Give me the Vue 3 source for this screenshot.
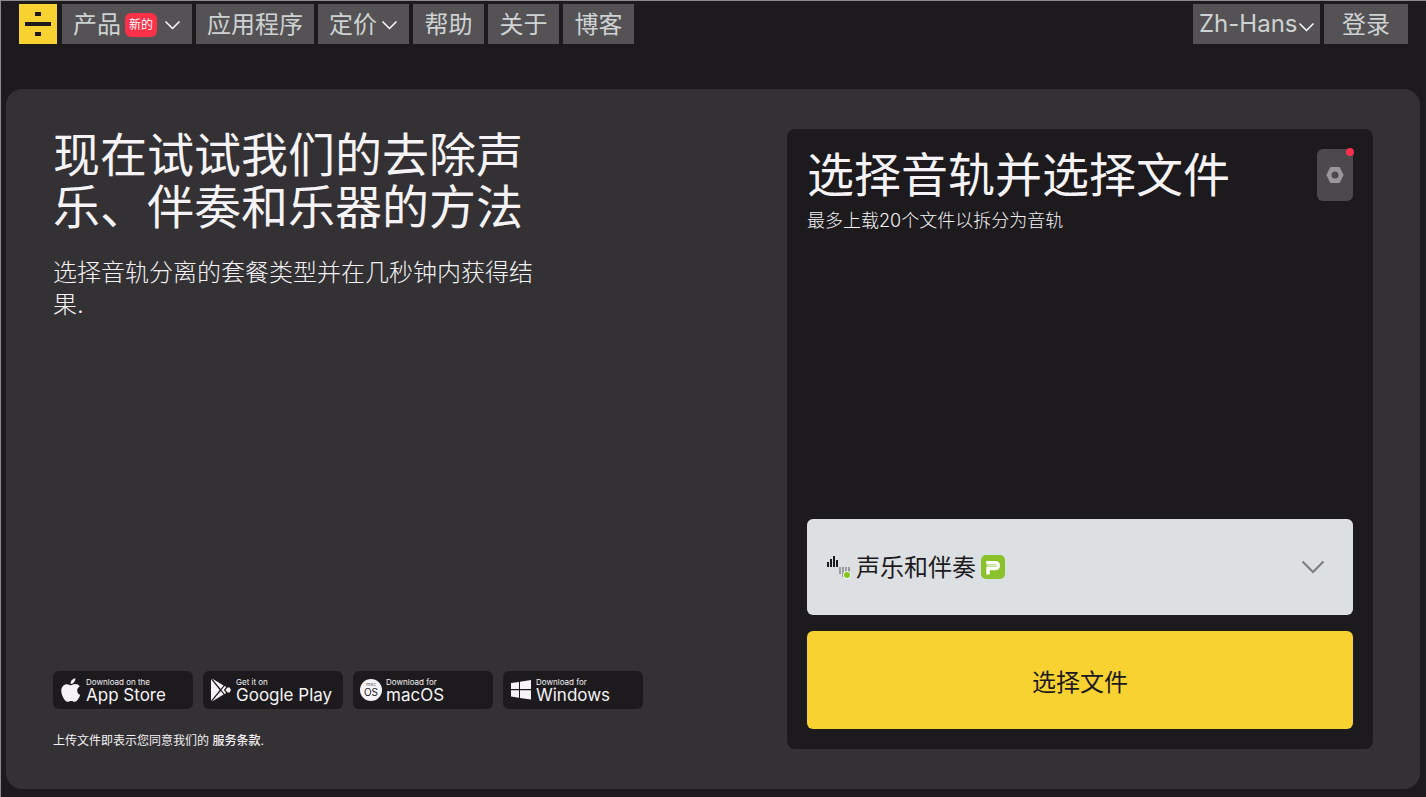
<script setup>
import { ref } from 'vue'

const menu = [
  { label: '产品', badge: '新的', dropdown: true },
  { label: '应用程序' },
  { label: '定价', dropdown: true },
  { label: '帮助' },
  { label: '关于' },
  { label: '博客' },
]
const stores = [
  { id: 'apple', small: 'Download on the', name: 'App Store' },
  { id: 'play', small: 'Get it on', name: 'Google Play' },
  { id: 'mac', small: 'Download for', name: 'macOS' },
  { id: 'windows', small: 'Download for', name: 'Windows' },
]
const language = ref('zh')
const stem = ref('vocal')
</script>

<template>
  <div class="page">
    <header class="bar">
      <a class="logo" href="#" aria-label="LALAL.AI">
        <svg width="38" height="40" viewBox="0 0 38 40" fill="#1c1a1d">
          <path d="M6 18h26v4H6zM16 8h6v4h-6zM16 28h6v4h-6z" />
        </svg>
      </a>
      <nav class="menu">
        <template v-for="item in menu" :key="item.label">
          <button v-if="item.dropdown" type="button" class="tab drop" aria-haspopup="true">
            <span>{{ item.label }}</span>
            <span v-if="item.badge" class="new">{{ item.badge }}</span>
            <svg class="chev" width="15" height="10" viewBox="0 0 15 10"><path d="M.5 1.500l7 7 7-7" /></svg>
          </button>
          <a v-else class="tab" href="#">{{ item.label }}</a>
        </template>
      </nav>
      <div class="account">
        <label class="tab lang">
          <select v-model="language" aria-label="Language">
            <option value="zh">Zh-Hans</option>
          </select>
          <svg class="chev" width="15" height="10" viewBox="0 0 15 10"><path d="M.5 1.500l7 7 7-7" /></svg>
        </label>
        <a class="tab login" href="#">登录</a>
      </div>
    </header>

    <main class="panel">
      <section class="intro">
        <h1>现在试试我们的去除声乐、伴奏和乐器的方法</h1>
        <p class="lead">选择音轨分离的套餐类型并在几秒钟内获得结果.</p>
        <div class="stores">
          <a v-for="s in stores" :key="s.id" class="store" href="#">
            <svg v-if="s.id === 'apple'" width="20" height="24" viewBox="0 0 20 24" fill="#f5f3f5">
              <path d="M14.3.2c.2 1.500-.4 2.900-1.300 4-.9 1.100-2.200 1.800-3.400 1.700-.2-1.400.5-2.900 1.300-3.800C11.800 1 13.200.3 14.300.2zM18.700 8.400c-1.600 1-2.500 2.300-2.500 4.100 0 2.100 1.200 3.700 3 4.500-.5 1.500-1.200 2.900-2.200 4.300-.9 1.300-1.900 2.500-3.300 2.500s-1.900-.8-3.500-.8c-1.700 0-2.200.8-3.600.8s-2.500-1.300-3.400-2.600C1.500 18.700.3 15.700.3 12.800c0-4.200 2.700-6.600 5.500-6.600 1.700 0 3 1.100 4 1.100s2.600-1.200 4.600-1.200c1.700 0 3.300.8 4.300 2.300z" />
            </svg>
            <svg v-else-if="s.id === 'play'" width="20" height="24" viewBox="0 0 20 24" fill="#f5f3f5">
              <path d="M0 1.200v21.600L8.700 12zM1 .4l8.700 10.500 2.900-3.500zM1 23.600l8.700-10.500 2.900 3.500zM13.600 8.100L10.400 12l3.200 3.900 1.600-1-2.400-2.900 2.400-2.900zM16.600 9.400L14.400 12l2.200 2.600h2L20 12l-1.400-2.600z" />
            </svg>
            <svg v-else-if="s.id === 'mac'" class="mac" width="20" height="24" viewBox="1 0 20 24">
              <circle cx="11" cy="12" r="11" fill="#f5f3f5" />
              <text x="11" y="8" text-anchor="middle" font-size="5" fill="#6b696c">mac</text>
              <text x="11" y="18" text-anchor="middle" font-size="10" fill="#1c1a1d">OS</text>
            </svg>
            <svg v-else width="20" height="24" viewBox="0 0 20 24" fill="#f5f3f5">
              <path d="M0 5l8-1.100V11H0zM9 3.700L20 2v9H9zM0 12.300h8v7.400l-8-1.200zM9 12.300h11v9.200l-11-1.600z" />
            </svg>
            <span class="store-text">
              <small>{{ s.small }}</small>
              <strong>{{ s.name }}</strong>
            </span>
          </a>
        </div>
        <p class="terms">上传文件即表示您同意我们的 <a href="#">服务条款</a>.</p>
      </section>

      <section class="card">
        <div class="card-head">
          <div>
            <h2>选择音轨并选择文件</h2>
            <p class="hint">最多上载20个文件以拆分为音轨</p>
          </div>
          <button type="button" class="settings" aria-label="设置">
            <svg width="18" height="16" viewBox="0 0 18 16">
              <path fill="#999799" fill-rule="evenodd" d="M5 0h8q.6 0 .9.500L17.400 7.400q.3.600 0 1.200L13.900 15.500q-.3.500-.9.500H5q-.6 0-.9-.5L.6 8.600q-.3-.6 0-1.200L4.100.500Q4.400 0 5 0zM9 4.500a3.500 3.500 0 1 0 0 7 3.500 3.500 0 0 0 0-7z" />
            </svg>
            <span class="dot"></span>
          </button>
        </div>
        <label class="stem">
          <svg width="24" height="24" viewBox="0 0 24 24">
            <path fill="#1c1a1d" d="M0 7h2v5H0zM3 4h2v8H3zM6 1h2v11H6zM9 5h2v7H9z" />
            <path fill="#999b9e" d="M12 12h2v7h-2zM15 12h2v10h-2zM18 12h2v10h-2zM21 12h2v6h-2z" />
            <circle cx="20" cy="20" r="4" fill="#f3f6f1" />
            <circle cx="20" cy="20" r="3" fill="#83c41f" />
          </svg>
          <select v-model="stem" aria-label="音轨类型">
            <option value="vocal">声乐和伴奏</option>
          </select>
          <svg width="24" height="24" viewBox="0 0 24 24">
            <rect width="24" height="24" rx="5" fill="#8bc12b" />
            <path fill="none" stroke="#fff" stroke-width="3.500" d="M7 19.500V13.500H15a2.200 2.200 0 0 0 2.200-2.200V10A2.200 2.200 0 0 0 15 7.800H5.200" />
            <path fill="none" stroke="#d5eab1" stroke-width="2" d="M6 10.700h9" />
          </svg>
          <svg class="stem-chev" width="24" height="14" viewBox="0 0 24 14"><path d="M1.500 1.500L12 12 22.500 1.500" /></svg>
        </label>
        <button type="button" class="choose">选择文件</button>
      </section>
    </main>
  </div>
</template>

<style>
body {
  background: #1c1a1d;
}
</style>

<style scoped>
* {
  box-sizing: border-box;
}
.page {
  min-height: 100vh;
  padding: 3px 6px 8px 5px;
  border-top: 1px solid #8a8a8a;
  border-left: 1px solid #8a8a8a;
  background: #1c1a1d;
  color: #f5f3f5;
  font-family: Inter, "Noto Sans CJK SC", sans-serif;
  display: flex;
  flex-direction: column;
  gap: 45px;
}
a {
  color: inherit;
  text-decoration: none;
}
button,
select {
  margin: 0;
  padding: 0;
  border: 0;
  font: inherit;
  color: inherit;
  cursor: pointer;
}
select {
  appearance: none;
  background: transparent;
}
h1,
h2,
p {
  margin: 0;
  font-weight: 400;
}
.bar {
  display: flex;
  height: 40px;
  padding: 0 12px 0 13px;
}
.logo {
  width: 38px;
  height: 40px;
  margin-right: 5px;
  background: #f8d231;
}
.menu,
.account {
  display: flex;
  gap: 4px;
}
.account {
  margin-left: auto;
}
.tab {
  display: flex;
  align-items: center;
  justify-content: center;
  min-width: 71px;
  height: 40px;
  padding: 2px 11px 0;
  background: #545255;
  color: #ced2d2;
  font-size: 24px;
  line-height: 38px;
  white-space: nowrap;
}
.drop {
  padding-right: 12px;
}
.new {
  height: 24px;
  margin: 0 3px 0 4px;
  padding: 0 4px;
  border-radius: 6px;
  background: #fc3049;
  color: #fff;
  font-size: 12px;
  line-height: 24px;
}
.chev {
  margin-left: 5px;
  flex: none;
}
.chev path {
  fill: none;
  stroke: #fff;
  stroke-width: 1.5;
}
.lang {
  padding: 0 6px;
}
.lang .chev {
  margin-left: 1px;
  margin-top: 5px;
}
.login {
  padding-left: 18px;
  padding-right: 18px;
}
.panel {
  flex: 1;
  display: grid;
  grid-template-columns: 734fr 586fr;
  padding: 40px 47px;
  border-radius: 16px;
  background: #333133;
}
.intro {
  display: flex;
  flex-direction: column;
}
h1,
h2 {
  font-size: 47px;
  line-height: 52px;
}
h1 {
  max-width: 480px;
}
.lead {
  max-width: 480px;
  margin-top: 24px;
  font-size: 24px;
  font-weight: 300;
  line-height: 32px;
}
.stores {
  display: flex;
  gap: 10px;
  margin-top: auto;
}
.store {
  display: flex;
  align-items: center;
  gap: 5px;
  width: 140px;
  height: 38px;
  padding: 0 8px;
  border-radius: 6px;
  background: #1c1a1d;
}
.mac {
  overflow: visible;
}
.store-text {
  display: flex;
  flex-direction: column;
  white-space: nowrap;
}
.store-text small {
  font-size: 8px;
  line-height: 10px;
}
.store-text strong {
  font-size: 17px;
  font-weight: 400;
  line-height: 16px;
}
.terms {
  margin-top: 24px;
  font-size: 12px;
  line-height: 16px;
}
.terms a {
  font-weight: 500;
}
.card {
  display: flex;
  flex-direction: column;
  padding: 20px;
  border-radius: 8px;
  background: #1c1a1d;
}
.card-head {
  display: flex;
  justify-content: space-between;
  align-items: flex-start;
}
.hint {
  margin-top: 8px;
  font-size: 18px;
  font-weight: 300;
  line-height: 24px;
}
.settings {
  position: relative;
  display: flex;
  align-items: center;
  justify-content: center;
  width: 36px;
  height: 52px;
  border-radius: 6px;
  background: #4b494c;
}
.dot {
  position: absolute;
  top: -1px;
  right: -1px;
  width: 8px;
  height: 8px;
  border-radius: 50%;
  background: #fc3049;
}
.stem {
  display: flex;
  align-items: center;
  gap: 5px;
  height: 96px;
  margin-top: auto;
  padding: 0 28px 0 20px;
  border-radius: 6px;
  background: #dce0e3;
  color: #1c1a1d;
  font-size: 24px;
}
.stem-chev {
  margin-left: auto;
}
.stem-chev path {
  fill: none;
  stroke: #7c7c7e;
  stroke-width: 2;
}
.choose {
  height: 98px;
  margin-top: 16px;
  border-radius: 6px;
  background: #f8d231;
  color: #1c1a1d;
  font-size: 24px;
}
</style>
